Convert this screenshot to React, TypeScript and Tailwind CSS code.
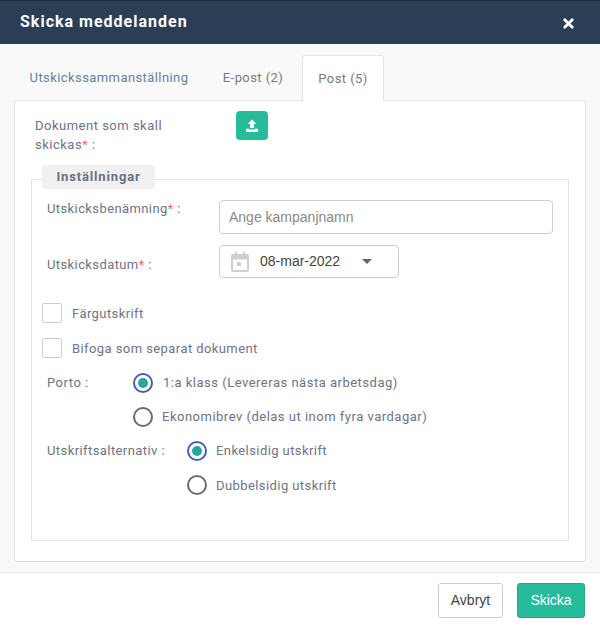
import { X } from "lucide-react";

function Radio({ checked }: { checked?: boolean }) {
  return (
    <span
      className={`flex h-5 w-5 shrink-0 items-center justify-center rounded-full border-2 bg-white ${
        checked ? "border-[#4a5db8]" : "border-[#6b6b6b]"
      }`}
    >
      {checked && <span className="h-[10px] w-[10px] rounded-full bg-[#26a69a]" />}
    </span>
  );
}

function Check({ label }: { label: string }) {
  return (
    <div className="flex h-5 items-center gap-[10px] tracking-[0.42px]">
      <span className="h-5 w-5 rounded-[2px] border border-[#cfcfcf] bg-white" />
      <span className="pt-[2px]">{label}</span>
    </div>
  );
}

function Req() {
  return <span className="font-light text-[#f33]">*</span>;
}

export default function App() {
  return (
    <div className="flex h-[628px] w-[600px] flex-col overflow-hidden bg-white font-['Roboto',sans-serif] text-[13px] tracking-[0.5px] text-[#6f7387]">
      <div className="flex h-[44px] shrink-0 items-center justify-between border-t border-[#1f2a38] bg-[#2c3e55] pl-[20px] pr-[24px]">
        <span className="pb-[2px] text-[16px] font-bold tracking-[1px] text-white">Skicka meddelanden</span>
        <X size={15} strokeWidth={4.5} className="mt-[2px] text-white" />
      </div>

      <div className="flex h-[529px] shrink-0 flex-col border-b border-[#e5e5e5] bg-[#f9f9f9] px-[14px] pt-[11px]">
        <div className="relative z-10 flex h-[45px] items-end tracking-[0.42px]">
          <span className="flex h-[45px] w-[190px] items-center justify-center text-[#6a7f99]">Utskickssammanställning</span>
          <span className="flex h-[45px] w-[98px] items-center justify-center text-[#7a7a7a]">E-post (2)</span>
          <span className="-mb-px flex h-[46px] w-[82px] items-center justify-center rounded-t-[3px] border border-b-0 border-[#e3e3e3] bg-white text-[#7a7a7a]">
            Post (5)
          </span>
        </div>

        <div className="flex h-[462px] flex-col rounded-b-[3px] border border-[#e3e3e3] bg-white px-[16px] pt-[10px]">
          <div className="flex">
            <div className="w-[200px] pl-[4px] pt-[5px] leading-[19px]">
              Dokument som skall
              <br />
              skickas<Req /> :
            </div>
            <button className="ml-[5px] flex h-[29px] w-[32px] items-center justify-center rounded-[4px] bg-[#26bc9a]">
              <svg width="14" height="14" viewBox="0 0 14 14" fill="#fff">
                <path d="M7 0.5 L11.5 5 H9 V9 H5 V5 H2.5 Z" />
                <path d="M1 9.8 H4.2 V10.4 H9.8 V9.8 H13 V13 H1 Z" />
              </svg>
            </button>
          </div>

          <div className="relative mt-[25px] h-[362px] border border-[#e3e3e3]">
            <span className="absolute -top-[15px] left-[10px] flex h-[24px] w-[113px] items-center justify-center rounded-[4px] bg-[#f0f0f0] font-bold tracking-[0.85px] text-[#6b6f82]">
              Inställningar
            </span>

            <div className="flex flex-col pt-[20px]">
              <div className="flex h-[34px] items-center">
                <div className="w-[187px] pb-[17px] pl-[15px] tracking-[0.4px]">Utskicksbenämning<Req /> :</div>
                <div className="flex h-[34px] w-[334px] items-center rounded-[4px] border border-[#cfcfcf] px-[9px] font-['Liberation_Sans',sans-serif] text-[14px] tracking-normal text-[#8a8a8a]">
                  Ange kampanjnamn
                </div>
              </div>

              <div className="mt-[11px] flex h-[33px] items-center">
                <div className="w-[187px] pl-[15px] pt-[6px] tracking-[0.4px]">Utskicksdatum<Req /> :</div>
                <div className="flex h-[33px] w-[180px] items-center rounded-[4px] border border-[#cfcfcf] pl-[11px] font-['Liberation_Sans',sans-serif] text-[14px] tracking-normal text-[#444]">
                  <svg width="18" height="20" viewBox="0 0 18 20" fill="none" stroke="#cfcfcf" strokeWidth="2">
                    <rect x="1" y="3" width="16" height="16" rx="1" />
                    <path d="M1 5.5h16" strokeWidth="4" />
                    <path d="M5 0v3M13 0v3" />
                    <rect x="6" y="10" width="4" height="4" fill="#cfcfcf" stroke="none" />
                  </svg>
                  <span className="ml-[11px]">08-mar-2022</span>
                  <span className="ml-[22px] h-0 w-0 border-x-[5px] border-t-[5px] border-x-transparent border-t-[#666]" />
                </div>
              </div>

              <div className="mt-[25px] flex flex-col gap-[15px] pl-[10px]">
                <Check label="Färgutskrift" />
                <Check label="Bifoga som separat dokument" />
              </div>

              <div className="mt-[15px] flex flex-col gap-[14px] pl-[15px]">
                <div className="flex h-5 items-center">
                  <span className="w-[86px]">Porto :</span>
                  <Radio checked />
                  <span className="ml-[10px]">1:a klass (Levereras nästa arbetsdag)</span>
                </div>
                <div className="flex h-5 items-center">
                  <span className="w-[86px]" />
                  <Radio />
                  <span className="ml-[9px]">Ekonomibrev (delas ut inom fyra vardagar)</span>
                </div>
                <div className="flex h-5 items-center tracking-[0.42px]">
                  <span className="w-[140px]">Utskriftsalternativ :</span>
                  <Radio checked />
                  <span className="ml-[9px]">Enkelsidig utskrift</span>
                </div>
                <div className="flex h-5 items-center tracking-[0.42px]">
                  <span className="w-[140px]" />
                  <Radio />
                  <span className="ml-[9px] pt-[2px]">Dubbelsidig utskrift</span>
                </div>
              </div>
            </div>
          </div>
        </div>
      </div>

      <div className="flex flex-1 items-start justify-end gap-[14px] pr-[15px] pt-[10px] font-['Liberation_Sans',sans-serif] text-[14px] tracking-normal">
        <button className="h-[35px] w-[65px] rounded-[3px] border border-[#cfcfcf] bg-white text-[#444]">
          Avbryt
        </button>
        <button className="h-[35px] w-[68px] rounded-[3px] border border-[#1fa888] bg-[#26bc9a] text-white">
          Skicka
        </button>
      </div>
    </div>
  );
}
